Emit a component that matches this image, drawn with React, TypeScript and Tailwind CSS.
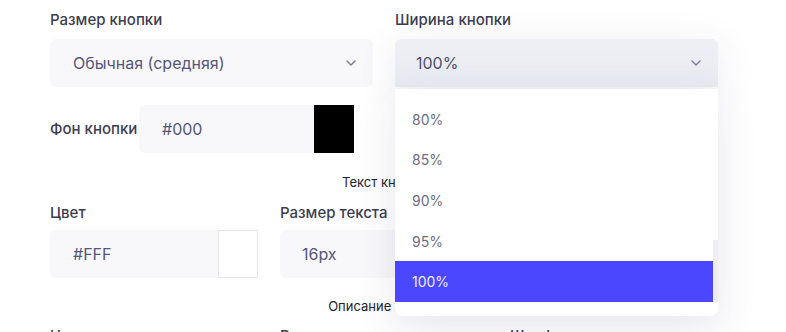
import React from "react";

const OPTIONS = ["80%", "85%", "90%", "95%", "100%"];

function Chevron() {
  return (
    <svg width="10" height="6" viewBox="0 0 10 6" fill="none">
      <path d="M1 1l4 4 4-4" stroke="#7b7b9a" strokeWidth="1.4" strokeLinecap="round" strokeLinejoin="round" />
    </svg>
  );
}

function Label({ children }: { children: React.ReactNode }) {
  return <div className="h-5 text-[15px] leading-5 font-medium text-[#3d3d52]">{children}</div>;
}

function ColorInput({ value, swatch }: { value: string; swatch: string }) {
  return (
    <div className="flex h-12">
      <div className="flex-1 flex items-center pl-[23px] rounded-l-md bg-[#f8f8fa] text-[16px] text-[#55557a]">
        {value}
      </div>
      <div className={`w-10 ${swatch}`} />
    </div>
  );
}

export default function App() {
  return (
    <div className="relative w-[786px] h-[332px] overflow-hidden bg-white font-['Inter',sans-serif]">
      <div className="w-[668px] ml-[50px] pt-[10px]">
        {/* Row 1: size + width */}
        <div className="grid grid-cols-2 gap-x-[22px]">
          <div>
            <Label>Размер кнопки</Label>
            <div className="mt-[9px] h-12 flex items-center justify-between pl-[23px] pr-[17px] rounded-md bg-[#f8f8fa] text-[16px] text-[#55557a]">
              <span>Обычная (средняя)</span>
              <Chevron />
            </div>
          </div>
          <div className="relative">
            <Label>Ширина кнопки</Label>
            <div className="mt-[9px] h-12 flex items-center justify-between pl-[21px] pr-[17px] rounded-t-md bg-gradient-to-b from-[#eef0f5] to-[#e8ebf1] text-[16px] text-[#4e4e6c] shadow-[0_8px_40px_rgba(60,50,110,0.10)]">
              <span>100%</span>
              <Chevron />
            </div>
            {/* Dropdown menu */}
            <div className="absolute left-0 top-[79px] z-10 w-[323px] h-[227px] pt-[10px] rounded-b-lg bg-white shadow-[0_12px_40px_rgba(60,50,110,0.12)] flex">
              <div className="w-[318px]">
                {OPTIONS.map((o) => (
                  <div
                    key={o}
                    className={
                      o === "100%"
                        ? "h-[40.6px] flex items-center pl-[17px] text-[14px] bg-[#4b47ff] text-[#ececff]"
                        : "h-[40.6px] flex items-center pl-[17px] text-[14px] text-[#6c6c82]"
                    }
                  >
                    {o}
                  </div>
                ))}
              </div>
              <div className="w-[5px]">
                <div className="mt-[141px] h-[62px] bg-[#eceef2]" />
              </div>
            </div>
          </div>
        </div>

        {/* Row 2: background */}
        <div className="mt-[18px] flex items-center">
          <div className="w-[89px] text-[15px] font-medium text-[#3d3d52]">Фон кнопки</div>
          <div className="w-[215px]">
            <ColorInput value="#000" swatch="bg-black" />
          </div>
        </div>

        <div className="mt-[19px] h-5 text-center text-[13px] leading-5 text-[#222230]">Текст кнопки</div>

        {/* Row 3: text */}
        <div className="mt-[11px] grid grid-cols-3 gap-x-[22px]">
          <div>
            <Label>Цвет</Label>
            <div className="mt-[7px]">
              <ColorInput value="#FFF" swatch="bg-white border border-[#e6e6ea]" />
            </div>
          </div>
          <div>
            <Label>Размер текста</Label>
            <div className="mt-[7px] h-12 flex items-center pl-[22px] rounded-md bg-[#f8f8fa] text-[16px] text-[#55557a]">
              16px
            </div>
          </div>
          <div>
            <Label>Шрифт</Label>
            <div className="mt-[7px] h-12 rounded-md bg-[#f8f8fa]" />
          </div>
        </div>

        <div className="mt-[18px] h-5 text-center text-[13px] leading-5 text-[#222230]">Описание кнопки</div>

        {/* Row 4: description */}
        <div className="mt-[10px] grid grid-cols-3 gap-x-[22px]">
          <Label>Цвет</Label>
          <Label>Высота строки</Label>
          <Label>Шрифт</Label>
        </div>
      </div>
    </div>
  );
}
